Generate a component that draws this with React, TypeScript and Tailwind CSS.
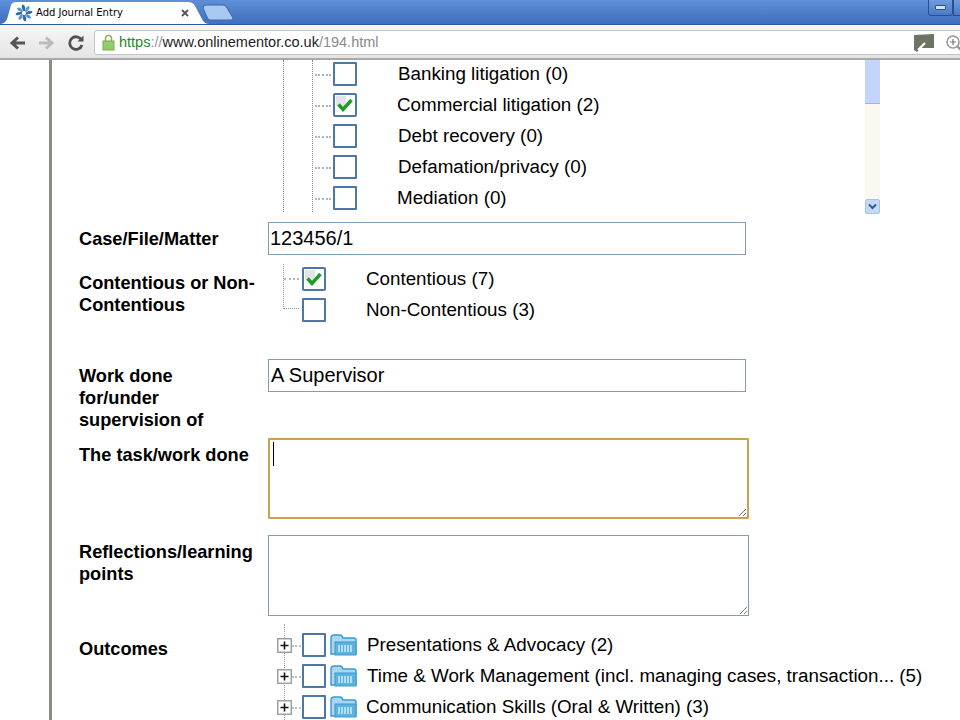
import React from "react";

const font = { fontFamily: '"Liberation Sans", Arial, sans-serif' };

function Check() {
  return (
    <svg width="24" height="24" viewBox="0 0 24 24" className="block">
      <rect x="1" y="1" width="22" height="22" fill="#fff" stroke="#4c77a6" strokeWidth="2" rx="1" />
      <rect x="3" y="3" width="10" height="10" fill="#e4e4e8" />
      <path d="M5.5 11.5 L10 16.5 L18.5 7" fill="none" stroke="#1f9a2a" strokeWidth="3.4" />
    </svg>
  );
}
function Box({ checked }: { checked?: boolean }) {
  return (
    <div className="-translate-y-px shrink-0">
      {checked ? <Check /> : <div className="w-6 h-6 border-2 border-[#4c77a6] rounded-[1px] bg-white" />}
    </div>
  );
}
function Folder() {
  return (
    <svg width="27" height="22" viewBox="0 0 27 22" className="block shrink-0 -translate-y-px">
      <path d="M1 20 V4 Q1 1 4 1 H10 Q12 1 13 4 H24 Q26 4 26 6 V20 Z" fill="#a9d6f2" stroke="#3d9ac9" strokeWidth="1.4" />
      <rect x="5" y="8" width="21" height="13" fill="#5cb3e0" stroke="#3d9ac9" />
      <path d="M9 11 V18 M12 11 V18 M15 11 V18 M18 11 V18 M21 11 V18" stroke="#d8effb" strokeWidth="1.4" />
    </svg>
  );
}
function Plus() {
  return (
    <svg width="15" height="15" viewBox="0 0 15 15" className="block shrink-0">
      <rect x="0.75" y="0.75" width="13.5" height="13.5" fill="#fff" stroke="#a0a0a0" strokeWidth="1.5" />
      <path d="M3.5 7.5 H11.5 M7.5 3.5 V11.5" stroke="#111" strokeWidth="1.6" />
    </svg>
  );
}

function LegalRow({ text, checked, narrow }: { text: string; checked?: boolean; narrow?: boolean }) {
  return (
    <div className="h-[31px] flex items-center">
      <div className="w-[16px] ml-[2px] border-t-2 border-dotted border-[#b4b4b4]" />
      <div className="ml-[2px]"><Box checked={checked} /></div>
      <span className={`text-[18.8px] text-black whitespace-nowrap ${narrow ? "ml-[40px]" : "ml-[41px]"}`}>{text}</span>
    </div>
  );
}

function Label({ children, className = "" }: { children: React.ReactNode; className?: string }) {
  return <div className={`w-[189px] shrink-0 text-[18.2px] leading-[22px] font-bold text-black ${className}`}>{children}</div>;
}

function OutcomeRow({ text, last }: { text: string; last?: boolean }) {
  return (
    <div className="h-[31px] flex items-center relative">
      <div className="ml-[9px]"><Plus /></div>
      <div className="w-[9px] border-t-2 border-dotted border-[#c0c0c0]" />
      <div className="ml-[1px]"><Box /></div>
      <div className="ml-[4px]"><Folder /></div>
      <span className={`text-[18.8px] whitespace-nowrap text-black ${last ? "ml-[9px]" : "ml-[10px]"}`}>{text}</span>
    </div>
  );
}

export default function App() {
  return (
    <div style={font} className="w-[960px] h-[720px] overflow-hidden bg-white flex flex-col">
      {/* title bar */}
      <div className="h-[25px] shrink-0 bg-gradient-to-b from-[#5f8fd8] to-[#3f6fbd] border-b border-[#2f5a9c] relative flex items-end">
        <svg width="240" height="25" viewBox="0 0 240 25" className="block">
          <path d="M0 25 Q6 25 8 17 L11 6 Q12 3 17 3 H188 Q193 3 195 7 L202 20 Q204 25 210 25 Z" fill="#fff" />
          <path d="M203 9 Q203 6 206 6 H223 Q226 6 227 9 L233 19 Q233 21 231 21 H210 Q208 21 207 18 Z" fill="#a9c8f0" stroke="#3a68ae" />
        </svg>
        <div className="absolute left-[15px] top-[4px] w-[18px] h-[18px]">
          <svg width="18" height="18" viewBox="0 0 18 18">
            {[0, 45, 90, 135, 180, 225, 270, 315].map((a) => (
              <path key={a} d="M8.4 7 Q5.5 3 7.6 0.6 Q10.6 0.6 10 7 Z" fill={a % 90 === 0 ? "#2a69b0" : "#5a93cf"} transform={`rotate(${a} 9 9)`} />
            ))}
          </svg>
        </div>
        <span className="absolute left-[36px] top-[6px] leading-[14px] text-black" style={{ fontFamily: '"DejaVu Sans", sans-serif', fontSize: 10 }}>Add Journal Entry</span>
        <svg width="8" height="8" viewBox="0 0 8 8" className="absolute left-[181px] top-[9px]">
          <path d="M1 1 L7 7 M7 1 L1 7" stroke="#555" strokeWidth="1.8" />
        </svg>
        <div className="absolute left-[928px] -top-[1px] w-[25px] h-[17px] border border-[#2c4f87] rounded-b-[3px] bg-gradient-to-b from-[#6f9be0] to-[#4a7ac8] flex items-center justify-center">
          <div className="w-[11px] h-[5px] bg-[#d5e2f5] border border-[#2c4f87] rounded-[1px]" />
        </div>
        <div className="absolute left-[953px] -top-[1px] w-[10px] h-[17px] border border-[#2c4f87] bg-gradient-to-b from-[#6f9be0] to-[#4a7ac8]" />
      </div>
      {/* toolbar */}
      <div className="h-[35px] shrink-0 bg-gradient-to-b from-[#f7f7f7] to-[#e4e4e4] border-b-2 border-[#a9a9a9] flex items-center relative">
        <svg width="18" height="16" viewBox="0 0 18 16" className="ml-[9px] translate-y-px">
          <path d="M16 8 H4 M9 2.5 L3 8 L9 13.5" fill="none" stroke="#555" strokeWidth="3" />
        </svg>
        <svg width="18" height="16" viewBox="0 0 18 16" className="ml-[10px] translate-y-px">
          <path d="M2 8 H14 M9 2.5 L15 8 L9 13.5" fill="none" stroke="#bcbcbc" strokeWidth="3" />
        </svg>
        <svg width="18" height="18" viewBox="0 0 18 18" className="ml-[12px] translate-y-px">
          <path d="M14.5 6 A6.3 6.3 0 1 0 15 11" fill="none" stroke="#505050" strokeWidth="2.8" />
          <path d="M10.5 7.5 L16.5 7.5 L16.5 1.5 Z" fill="#505050" />
        </svg>
        <div className="ml-[9px] mt-[2px] h-[25px] flex-1 -mr-[10px] bg-white border border-[#c4c4c4] rounded-[3px] flex items-center">
          <svg width="13" height="17" viewBox="0 0 13 17" className="ml-[7px]">
            <path d="M3.5 7 V4.5 A3 3 0 0 1 9.5 4.5 V7" fill="none" stroke="#a0a868" strokeWidth="1.6" />
            <rect x="1" y="7" width="11" height="9" fill="#8fd068" stroke="#7aa850" />
          </svg>
          <span className="ml-[4px] text-[14.5px] leading-none whitespace-nowrap">
            <span className="text-[#1c8a1c]">https</span>
            <span className="text-[#9a9a9a]">://</span>
            <span className="text-[#222]">www.onlinementor.co.uk</span>
            <span className="text-[#8a8a8a]">/194.html</span>
          </span>
          <div className="flex-1" />
          <svg width="22" height="20" viewBox="0 0 22 20" className="mr-[10px]">
            <path d="M1 2 L21 1 V15 H8 L4 19 L1 17 Z" fill="#6d7464" />
            <path d="M5 17 L12 10" stroke="#fff" strokeWidth="2.2" />
          </svg>
          <svg width="24" height="18" viewBox="0 0 24 18">
            <circle cx="8" cy="8" r="6" fill="#fff" stroke="#9a9a9a" strokeWidth="1.6" />
            <path d="M5 8 H11 M8 5 V11" stroke="#777" strokeWidth="1.2" />
            <path d="M12 12 L16 16" stroke="#9a9a9a" strokeWidth="2.4" />
          </svg>
        </div>
      </div>
      {/* page */}
      <div className="flex-1 flex overflow-hidden">
        <div className="ml-[49px] w-[3px] bg-[#8d8d7f] shrink-0" />
        <div className="flex-1 pl-[27px] text-black">
          {/* legal tree */}
          <div className="flex h-[154px] overflow-hidden -ml-[27px]">
            <div className="ml-[231px] w-[29px] border-l border-dotted border-[#888] h-[152px]" />
            <div className="w-[553px] border-l border-dotted border-[#888] h-[152px] overflow-hidden">
              <div className="-mt-[1px]">
                <LegalRow text="Banking litigation (0)" />
                <LegalRow text="Commercial litigation (2)" checked narrow />
                <LegalRow text="Debt recovery (0)" />
                <LegalRow text="Defamation/privacy (0)" />
                <LegalRow text="Mediation (0)" narrow />
              </div>
            </div>
            <div className="w-[15px] h-[154px] bg-[#fbf7f1] flex flex-col justify-between">
              <div className="h-[44px] bg-[#c3d5fb] border-b border-[#9fb4e0]" />
              <div className="h-[15px] bg-[#c5d8f8] border border-[#a9c0e8] rounded-[2px] flex items-center justify-center">
                <svg width="9" height="7" viewBox="0 0 9 7"><path d="M1 1.5 L4.5 5 L8 1.5" fill="none" stroke="#3a5a94" strokeWidth="2" /></svg>
              </div>
            </div>
          </div>
          {/* case */}
          <div className="flex mt-[8px]">
            <Label className="pt-[6px]">Case/File/Matter</Label>
            <div className="w-[478px] h-[33px] border border-[#7f9db9] flex items-center pl-[1px] text-[20px] leading-none pb-[2px]">123456/1</div>
          </div>
          {/* contentious */}
          <div className="flex mt-[9px] h-[86px]">
            <Label className="pt-[8px]">Contentious or Non-<br />Contentious</Label>
            <div className="relative">
              <div className="absolute left-[15px] top-0 w-[16px] h-[45px] border-l border-b border-dotted border-[#999]" />
              <div className="absolute left-[16px] top-[14px] w-[15px] border-t-2 border-dotted border-[#b4b4b4]" />
              <div className="h-[31px] flex items-center pl-[34px] relative"><Box checked /><span className="ml-[40px] text-[18.8px] whitespace-nowrap">Contentious (7)</span></div>
              <div className="h-[31px] flex items-center pl-[34px] relative"><Box /><span className="ml-[40px] text-[18.8px] whitespace-nowrap">Non-Contentious (3)</span></div>
            </div>
          </div>
          {/* work */}
          <div className="flex mt-[9px] h-[79px]">
            <Label className="pt-[6px]">Work done<br />for/under<br />supervision of</Label>
            <div className="w-[478px] h-[33px] border border-[#7f9db9] flex items-center pl-[2px] text-[20px] leading-none pb-[2px]">A Supervisor</div>
          </div>
          {/* task */}
          <div className="flex">
            <Label className="pt-[6px]">The task/work done</Label>
            <div className="relative w-[481px] h-[81px] border-2 border-[#c9a251] rounded-[1px] bg-white">
              <div className="absolute left-[3px] top-[2px] w-[1px] h-[24px] bg-black" />
              <svg width="9" height="9" viewBox="0 0 9 9" className="absolute right-0 bottom-0">
                <path d="M1 8 L8 1 M5 8 L8 5" stroke="#777" strokeWidth="1" />
              </svg>
            </div>
          </div>
          {/* reflections */}
          <div className="flex mt-[16px]">
            <Label className="pt-[6px]">Reflections/learning<br />points</Label>
            <div className="relative w-[481px] h-[81px] border border-[#7f9db9] bg-white">
              <svg width="9" height="9" viewBox="0 0 9 9" className="absolute right-0 bottom-0">
                <path d="M1 8 L8 1 M5 8 L8 5" stroke="#777" strokeWidth="1" />
              </svg>
            </div>
          </div>
          {/* outcomes */}
          <div className="flex mt-[14px]">
            <Label className="pt-[8px]">Outcomes</Label>
            <div className="relative">
              <div className="absolute left-[16px] top-[-6px] h-[110px] border-l border-dotted border-[#999]" />
              <OutcomeRow text="Presentations & Advocacy (2)" />
              <OutcomeRow text="Time & Work Management (incl. managing cases, transaction... (5)" />
              <OutcomeRow text="Communication Skills (Oral & Written) (3)" last />
            </div>
          </div>
        </div>
      </div>
    </div>
  );
}
